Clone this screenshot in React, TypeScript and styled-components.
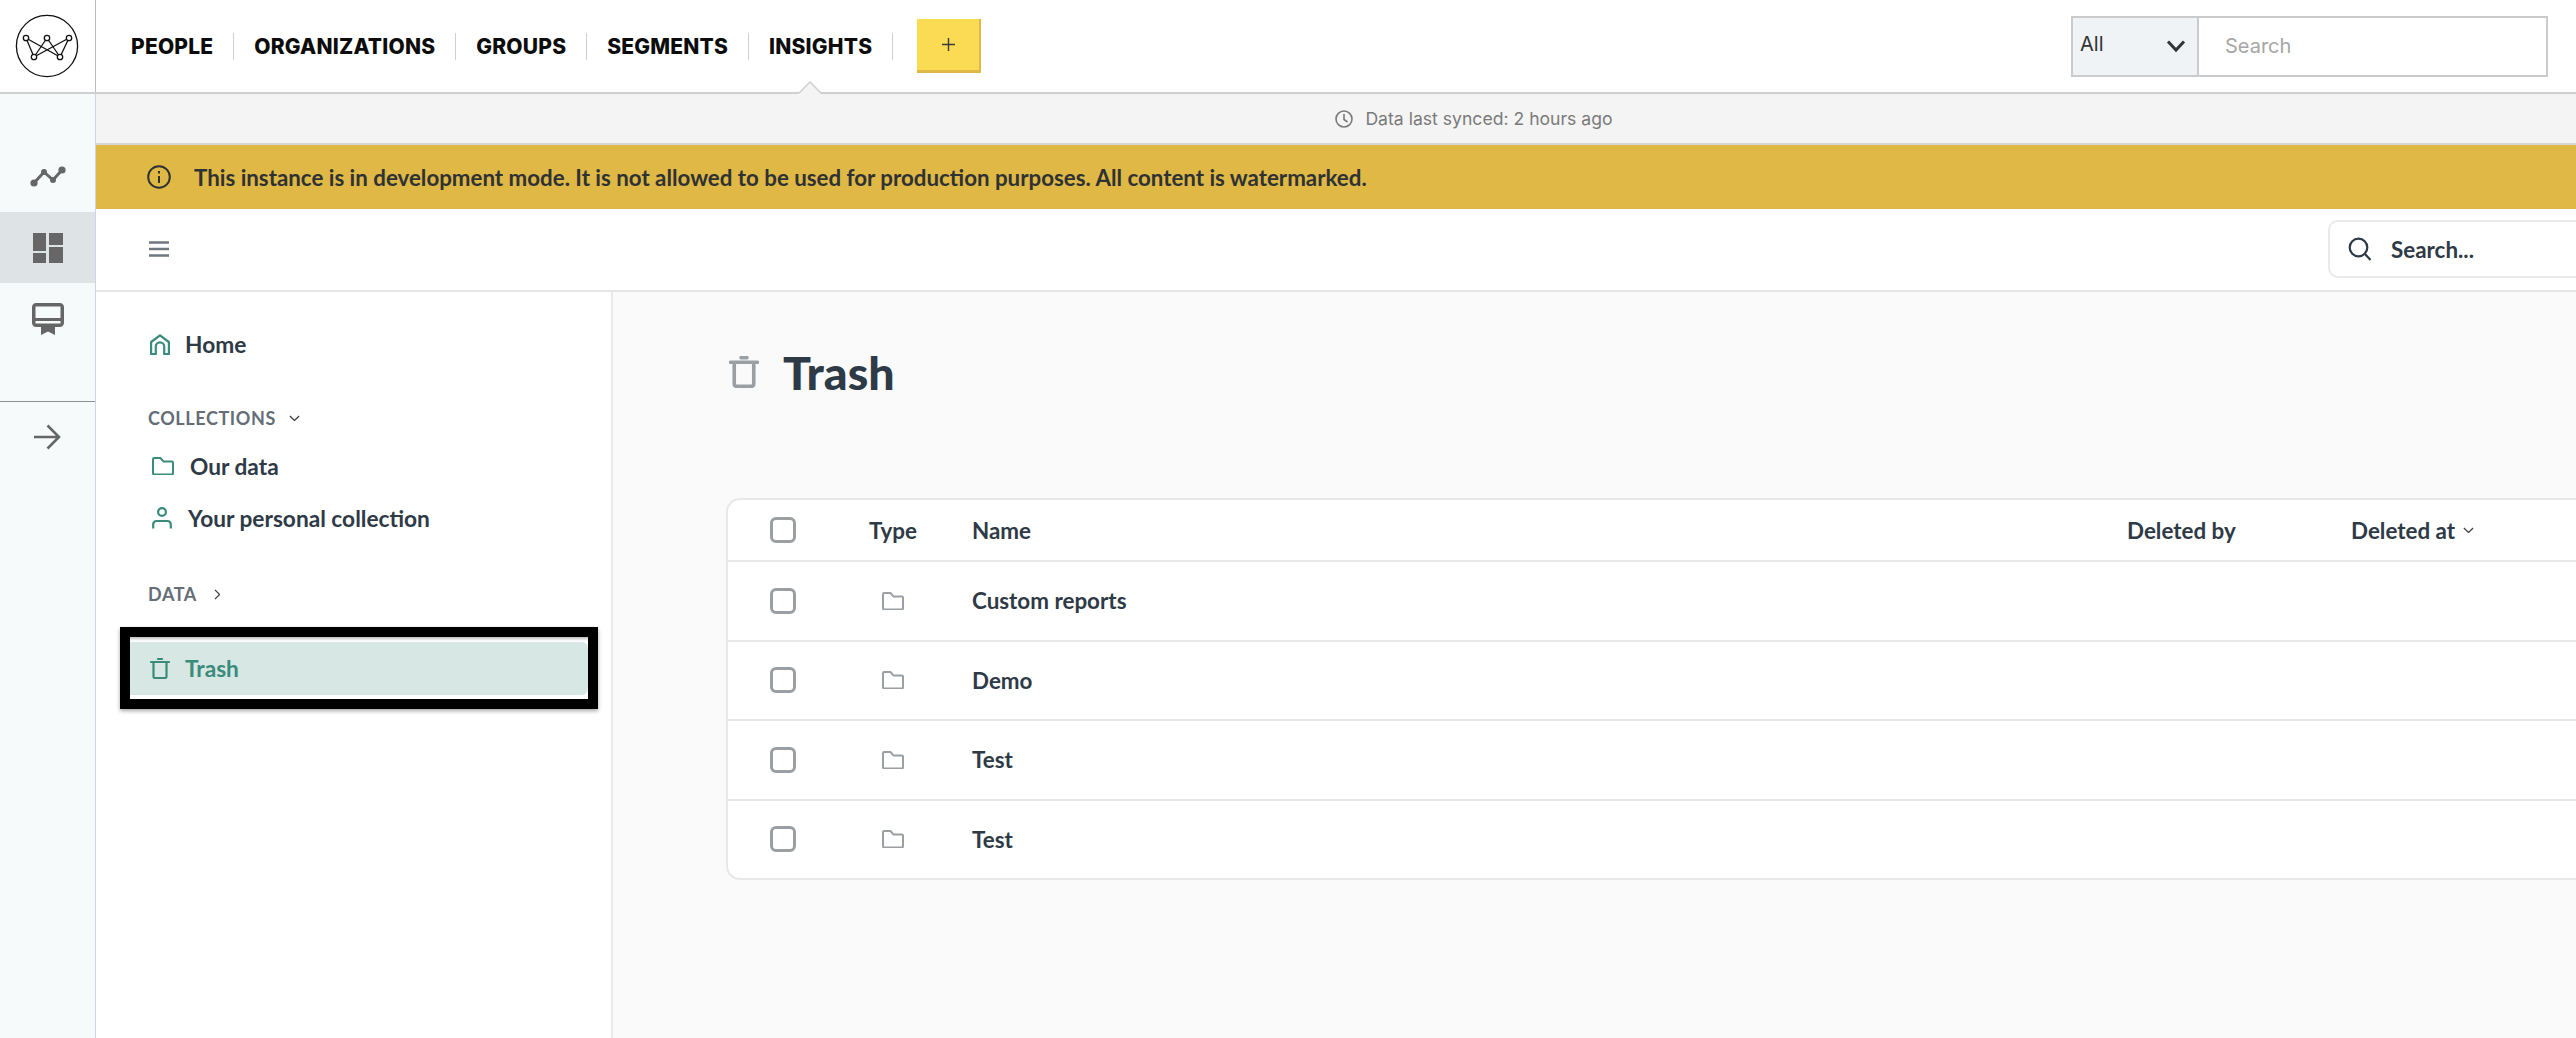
import React from 'react';
import styled, { createGlobalStyle } from 'styled-components';

const GlobalStyle = createGlobalStyle`
  html, body {
    margin: 0;
    padding: 0;
    background: #fff;
  }
  * {
    box-sizing: border-box;
  }
`;

const Ink = '#2e3a46';
const Teal = '#3b8b7b';
const Muted = '#656d76';

const Page = styled.div`
  position: relative;
  width: 2576px;
  height: 1038px;
  overflow: hidden;
  display: flex;
  flex-direction: column;
  font-family: Lato, 'Open Sans', sans-serif;
  color: ${Ink};
`;

const TopBar = styled.header`
  position: relative;
  flex: 0 0 94px;
  display: flex;
  align-items: stretch;
  background: #fff;
  border-bottom: 2px solid #cfcfcf;
`;

const LogoCell = styled.div`
  width: 96px;
  display: flex;
  align-items: center;
  padding-left: 15px;
  border-right: 1px solid #bdbdbd;
`;

const Nav = styled.nav`
  display: flex;
  align-items: center;
  padding-left: 15px;
`;

const NavLink = styled.a`
  height: 27px;
  display: flex;
  align-items: center;
  padding: 0 20px;
  border-right: 1px solid #cfcfcf;
  font-family: Inter, sans-serif;
  font-size: 21px;
  font-weight: 800;
  letter-spacing: 0.2px;
  color: #0c0c0c;
`;

const AddButton = styled.button`
  width: 64px;
  height: 54px;
  margin-left: 24px;
  align-self: center;
  padding: 0;
  display: flex;
  align-items: center;
  justify-content: center;
  background: #fbdb54;
  border: 0;
  border-right: 2px solid #e0b847;
  border-bottom: 3px solid #e0b847;
  color: #3a3a3a;
`;

const ActiveCaret = styled.svg`
  position: absolute;
  left: 797px;
  top: 81px;
`;

const GlobalSearch = styled.div`
  margin-left: auto;
  margin-right: 28px;
  align-self: center;
  width: 477px;
  height: 61px;
  display: flex;
  border: 2px solid #cbcbcb;
`;

const ScopeSelect = styled.div`
  width: 126px;
  display: flex;
  align-items: center;
  justify-content: space-between;
  padding: 0 11px 0 7px;
  background: #eff3f5;
  border-right: 2px solid #cbcbcb;
  font-family: Inter, sans-serif;
  font-size: 20px;
  color: #333;
  span {
    margin-top: -4px;
  }
`;

const SearchField = styled.div`
  flex: 1;
  display: flex;
  align-items: center;
  padding-left: 26px;
  font-family: Inter, sans-serif;
  font-size: 20px;
  color: #a6a6a6;
`;

const Body = styled.div`
  flex: 1;
  display: flex;
  min-height: 0;
`;

const Rail = styled.aside`
  width: 96px;
  padding-top: 47px;
  display: flex;
  flex-direction: column;
  background: #f6fafb;
  border-right: 1px solid #cdd6e0;
`;

const RailItem = styled.div<{ $active?: boolean }>`
  height: 71px;
  display: flex;
  align-items: center;
  justify-content: center;
  background: ${(props) => (props.$active ? '#dee3e6' : 'transparent')};
`;

const RailDivider = styled.hr`
  width: 100%;
  margin: 47px 0 0;
  border: 0;
  border-top: 1px solid #8b9095;
`;

const RailArrow = styled.div`
  display: flex;
  justify-content: center;
  padding-top: 22px;
`;

const Main = styled.main`
  flex: 1;
  min-width: 0;
  display: flex;
  flex-direction: column;
`;

const SyncBar = styled.div`
  flex: 0 0 51px;
  display: flex;
  align-items: center;
  justify-content: center;
  gap: 12px;
  padding-left: 276px;
  background: #f4f4f4;
  border-bottom: 2px solid #d6d6d6;
  font-family: Inter, sans-serif;
  font-size: 17.6px;
  color: #7a7a7a;
`;

const Banner = styled.div`
  flex: 0 0 64px;
  display: flex;
  align-items: center;
  gap: 23px;
  padding-left: 51px;
  background: #e0b846;
  font-size: 22.3px;
  font-weight: 700;
  color: #2f3233;
`;

const SubHeader = styled.div`
  flex: 0 0 83px;
  display: flex;
  align-items: center;
  justify-content: space-between;
  padding: 0 0 1px 53px;
  background: #fff;
  border-bottom: 2px solid #e4e6e8;
`;

const AppSearch = styled.div`
  width: 260px;
  height: 58px;
  margin-right: -12px;
  display: flex;
  align-items: center;
  gap: 19px;
  padding-left: 18px;
  border: 2px solid #e8eaec;
  border-radius: 10px;
  font-size: 22.4px;
  font-weight: 700;
  color: ${Ink};
`;

const Content = styled.div`
  flex: 1;
  min-height: 0;
  display: flex;
`;

const LeftNav = styled.div`
  flex: 0 0 517px;
  padding-top: 37px;
  background: #fff;
  border-right: 2px solid #e8eaec;
`;

const NavRow = styled.div<{ $indent?: number; $gap?: number }>`
  display: flex;
  align-items: center;
  height: 30px;
  gap: ${(props) => props.$gap ?? 15}px;
  margin-left: ${(props) => props.$indent ?? 54}px;
  font-size: 22.7px;
  font-weight: 700;
  color: ${Ink};
`;

const SectionLabel = styled.div<{ $top: number; $gap: number }>`
  display: flex;
  align-items: center;
  gap: ${(props) => props.$gap}px;
  height: 20px;
  margin: ${(props) => props.$top}px 0 0 52px;
  font-size: 18px;
  font-weight: 700;
  letter-spacing: 0.6px;
  color: ${Muted};
`;

const CollectionRow = styled(NavRow)<{ $top: number }>`
  margin-top: ${(props) => props.$top}px;
  margin-left: 56px;
  gap: 16px;
`;

const Highlight = styled.div`
  height: 82px;
  margin: 23px 13px 0 24px;
  padding-top: 5px;
  border: 10px solid #000;
  background: #fff;
  box-shadow: 0 2px 4px rgba(0, 0, 0, 0.35), inset 0 4px 3px -2px rgba(0, 0, 0, 0.25);
`;

const ActiveRow = styled.div`
  height: 53px;
  display: flex;
  align-items: center;
  gap: 15px;
  padding-left: 20px;
  background: #d7e7e3;
  border-radius: 0 6px 6px 0;
  font-size: 22.7px;
  font-weight: 700;
  color: ${Teal};
`;

const TrashPane = styled.section`
  flex: 1;
  min-width: 0;
  padding: 50px 0 0 113px;
  background: #fafafa;
`;

const PageTitle = styled.h1`
  display: flex;
  align-items: center;
  gap: 24px;
  height: 60px;
  margin: 0 0 96px 3px;
  font-size: 46.5px;
  font-weight: 900;
  color: ${Ink};
`;

const Card = styled.div`
  width: 2000px;
  background: #fff;
  border: 2px solid #e6e8ea;
  border-radius: 14px;
`;

const Row = styled.div<{ $height: number }>`
  height: ${(props) => props.$height}px;
  display: grid;
  grid-template-columns: 99px 103px 1155px 224px 1fr;
  align-items: center;
  padding-left: 42px;
  font-size: 22.4px;
  color: ${Ink};
  & + & {
    border-top: 2px solid #e6e8ea;
  }
`;

const HeadCell = styled.div`
  display: flex;
  align-items: center;
  gap: 8px;
  font-weight: 700;
`;

const NameCell = styled.div`
  font-weight: 700;
`;

const Checkbox = styled.span`
  display: block;
  width: 26px;
  height: 26px;
  border: 3px solid #9a9fa4;
  border-radius: 6px;
  background: #fff;
`;

const TypeIcon = styled.div`
  display: flex;
  padding-left: 13px;
`;

const Logo = () => (
  <svg width="64" height="64" viewBox="0 0 64 64" fill="none" stroke="#111" strokeWidth="1.3">
    <circle cx="32" cy="32" r="30.6" />
    <path d="M11 24L19 43M11 24L45 43M32 24L19 43M32 24L45 43M54 24L19 43M54 24L45 43" />
    {[[11, 24], [32, 24], [54, 24], [19, 43], [45, 43]].map(([x, y]) => (
      <circle key={`${x}_${y}`} cx={x} cy={y} r="2.7" fill="#fff" />
    ))}
  </svg>
);

const FolderIcon = ({ size = 22, color = '#9a9fa4', weight = 2 }: any) => (
  <svg width={size} height={size * 0.84} viewBox="0 0 22 18.5" fill="none" stroke={color} strokeWidth={weight} strokeLinejoin="round">
    <path d="M1 2.2C1 1.5 1.5 1 2.2 1H8.4L11.4 4.4H19.8C20.5 4.4 21 4.9 21 5.6V16.3C21 17 20.5 17.5 19.8 17.5H2.2C1.5 17.5 1 17 1 16.3Z" />
  </svg>
);

const TrashIcon = ({ width, height, color, weight }: any) => (
  <svg width={width} height={height} viewBox="0 0 20 21" fill="none" stroke={color} strokeWidth={weight} strokeLinecap="round" strokeLinejoin="round">
    <path d="M1 4H19M3.5 4V18.4C3.5 19.3 4.2 20 5.1 20H14.9C15.8 20 16.5 19.3 16.5 18.4V4M8 1H12" />
  </svg>
);

const Chevron = ({ dir = 'down', size = 11, color = '#444' }: any) => (
  <svg width={dir === 'down' ? size : size / 2 + 1} height={dir === 'down' ? size / 2 + 1 : size} viewBox={dir === 'down' ? '0 0 12 7' : '0 0 7 12'} fill="none" stroke={color} strokeWidth="1.4">
    <path d={dir === 'down' ? 'M1 1L6 6L11 1' : 'M1 1L6 6L1 11'} />
  </svg>
);

const rows = ['Custom reports', 'Demo', 'Test', 'Test'];

export default function App() {
  return (
    <Page>
      <GlobalStyle />
      <TopBar>
        <LogoCell>
          <Logo />
        </LogoCell>
        <Nav>
          {['PEOPLE', 'ORGANIZATIONS', 'GROUPS', 'SEGMENTS', 'INSIGHTS'].map((item) => (
            <NavLink key={item}>{item}</NavLink>
          ))}
        </Nav>
        <AddButton aria-label="Add">
          <svg width="15" height="15" viewBox="0 0 15 15" stroke="#3a3a3a" strokeWidth="1.4">
            <path d="M7.5 1V14M1 7.5H14" />
          </svg>
        </AddButton>
        <GlobalSearch>
          <ScopeSelect>
            <span>All</span>
            <svg width="20" height="14" viewBox="0 0 20 14" fill="none" stroke="#333" strokeWidth="3">
              <path d="M2 2.5L10 11L18 2.5" />
            </svg>
          </ScopeSelect>
          <SearchField>Search</SearchField>
        </GlobalSearch>
        <ActiveCaret width="26" height="13" viewBox="0 0 26 13">
          <path d="M1 13L13 1L25 13" fill="#f4f4f4" stroke="#cfcfcf" strokeWidth="1.5" />
        </ActiveCaret>
      </TopBar>
      <Body>
        <Rail>
          <RailItem>
            <svg width="36" height="21" viewBox="0 0 36 21" fill="none" stroke="#666" strokeWidth="3">
              <path d="M4 17L14 6L23 14L32 4" />
              <g fill="#666" stroke="none">
                <circle cx="4" cy="17" r="3.6" />
                <circle cx="14" cy="6" r="3" />
                <circle cx="23" cy="14" r="3" />
                <circle cx="32" cy="4" r="3.6" />
              </g>
            </svg>
          </RailItem>
          <RailItem $active>
            <svg width="30" height="30" viewBox="0 0 30 30" fill="#666">
              <path d="M0 0H13V18H0ZM16 0H30V12H16ZM0 20H13V30H0ZM16 14H30V30H16Z" />
            </svg>
          </RailItem>
          <RailItem>
            <svg width="32" height="32" viewBox="0 0 32 32" fill="#666">
              <path fillRule="evenodd" d="M4 0H28C30.2 0 32 1.8 32 4V20C32 22.2 30.2 24 28 24H23V32L16 28.500L9 32V24H4C1.8 24 0 22.2 0 20V4C0 1.8 1.800 0 4 0ZM3.500 3.500V15H28.500V3.500ZM3.500 18V20.500H28.500V18Z" />
            </svg>
          </RailItem>
          <RailDivider />
          <RailArrow>
            <svg width="27" height="26" viewBox="0 0 27 26" fill="none" stroke="#666" strokeWidth="2.6">
              <path d="M0 13H25M13.500 1.500L25 13L13.500 24.500" />
            </svg>
          </RailArrow>
        </Rail>
        <Main>
          <SyncBar>
            <svg width="18" height="18" viewBox="0 0 18 18" fill="none" stroke="#7a7a7a" strokeWidth="1.6">
              <circle cx="9" cy="9" r="8" />
              <path d="M9 4V9.500L12.500 12" />
            </svg>
            Data last synced: 2 hours ago
          </SyncBar>
          <Banner>
            <svg width="24" height="24" viewBox="0 0 24 24" fill="none" stroke="#2f3233" strokeWidth="2">
              <circle cx="12" cy="12" r="10.800" />
              <path d="M12 11V18M12 6V8.500" />
            </svg>
            This instance is in development mode. It is not allowed to be used for production purposes. All content is watermarked.
          </Banner>
          <SubHeader>
            <svg width="20" height="16" viewBox="0 0 20 16" stroke="#6f7780" strokeWidth="2.6">
              <path d="M0 1.500H20M0 8H20M0 14.500H20" />
            </svg>
            <AppSearch>
              <svg width="24" height="24" viewBox="0 0 24 24" fill="none" stroke={Ink} strokeWidth="2.2">
                <circle cx="10.500" cy="10.500" r="8.800" />
                <path d="M17 17L22.500 23" />
              </svg>
              Search...
            </AppSearch>
          </SubHeader>
          <Content>
            <LeftNav>
              <NavRow>
                <svg width="20" height="21" viewBox="0 0 20 21" fill="none" stroke={Teal} strokeWidth="2.200" strokeLinejoin="round">
                  <path d="M1.100 20V8L10 1.300L18.900 8V20H14.200V12.500C14.200 10.200 12.300 8.300 10 8.300C7.700 8.300 5.800 10.200 5.800 12.500V20Z" />
                </svg>
                Home
              </NavRow>
              <SectionLabel $top={49} $gap={13}>
                COLLECTIONS
                <Chevron />
              </SectionLabel>
              <CollectionRow $top={23}>
                <FolderIcon color={Teal} weight={2} />
                Our data
              </CollectionRow>
              <CollectionRow $top={22}>
                <svg width="20" height="22" viewBox="0 0 20 22" fill="none" stroke={Teal} strokeWidth="2.200">
                  <circle cx="10" cy="5" r="3.900" />
                  <path d="M1.200 21.500V17.500C1.200 15.500 2.700 14 4.700 14H15.300C17.300 14 18.800 15.500 18.800 17.500V21.500" />
                </svg>
                Your personal collection
              </CollectionRow>
              <SectionLabel $top={51} $gap={17}>
                DATA
                <Chevron dir="right" />
              </SectionLabel>
              <Highlight>
                <ActiveRow>
                  <TrashIcon width={20} height={21} color={Teal} weight={2.2} />
                  Trash
                </ActiveRow>
              </Highlight>
            </LeftNav>
            <TrashPane>
              <PageTitle>
                <TrashIcon width={30} height={32} color="#9a9fa4" weight={2.4} />
                Trash
              </PageTitle>
              <Card>
                <Row $height={60}>
                  <Checkbox />
                  <HeadCell>Type</HeadCell>
                  <HeadCell>Name</HeadCell>
                  <HeadCell>Deleted by</HeadCell>
                  <HeadCell>
                    Deleted at
                    <Chevron />
                  </HeadCell>
                </Row>
                {rows.map((name, i) => (
                  <Row $height={79.500} key={`row_${i}`}>
                    <Checkbox />
                    <TypeIcon>
                      <FolderIcon />
                    </TypeIcon>
                    <NameCell>{name}</NameCell>
                  </Row>
                ))}
              </Card>
            </TrashPane>
          </Content>
        </Main>
      </Body>
    </Page>
  );
}
